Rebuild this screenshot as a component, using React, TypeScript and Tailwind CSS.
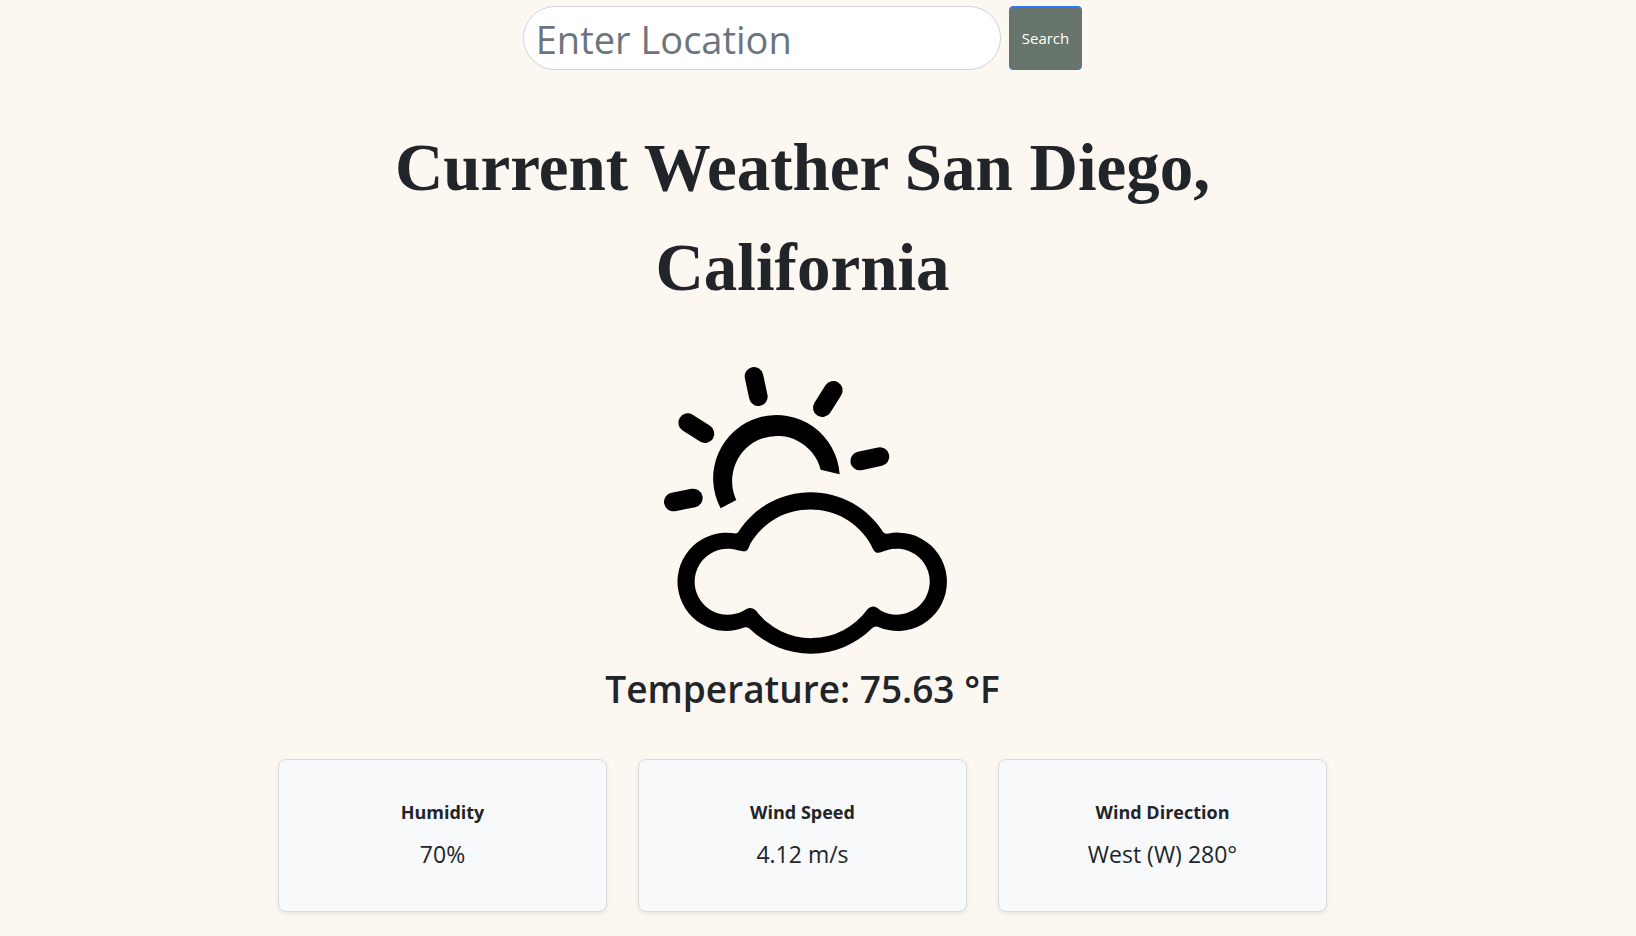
import React from "react";

type Reading = { title: string; value: string };

const readings: Reading[] = [
  { title: "Humidity", value: "70%" },
  { title: "Wind Speed", value: "4.12 m/s" },
  { title: "Wind Direction", value: "West (W) 280°" },
];

function SearchBar() {
  return (
    <form className="flex justify-center gap-2" onSubmit={(e) => e.preventDefault()}>
      <input
        type="text"
        aria-label="Location"
        placeholder="Enter Location"
        className="h-16 w-[478px] rounded-full border border-[#ced4da] bg-white px-3 pt-0.5 text-[38px] text-[#212529] placeholder:text-[#6c757d]"
      />
      <button
        type="submit"
        className="h-16 rounded border border-[#2f74ff] bg-[#68756d] px-3 text-[15px] text-white"
      >
        Search
      </button>
    </form>
  );
}

function PartlyCloudyIcon() {
  return (
    <svg viewBox="8 30 900 900" className="size-[300px]" role="img" aria-label="Partly cloudy">
      <g stroke="#000" strokeWidth="56" strokeLinecap="round">
        <path d="M311 64 324 125" />
        <path d="M549 106 516 158" />
        <path d="M112 203 164 236" />
        <path d="M628 318 689 305" />
        <path d="M69 441 129 429" />
      </g>
      <path d="M211 460A190 190 0 1 1 568 358L511 344A135 135 0 1 0 258 435Z" />
      <path
        transform="translate(0 375)"
        fillRule="evenodd"
        d="M264 156A257 257 0 0 1 698 156Q704 163 712 161A147.5 147.5 0 1 1 682 440Q672 438 666 444A261 261 0 0 1 298 446Q292 440 284 442A147.3 147.3 0 1 1 252 160Q258 162 264 156ZM300 191A209 209 0 0 1 660 191L669 209Q676 222 692 217L700 214A99 99 0 1 1 692 392L680 383Q664 374 652 387A208 208 0 0 1 316 391Q303 380 290 386L278 393A99 99 0 1 1 262 211L274 213Q290 217 295 203Z"
      />
    </svg>
  );
}

function ReadingCard({ title, value }: Reading) {
  return (
    <section className="rounded-lg border border-[#d9dcde] bg-[#f8f9fa] pt-10 pb-[39px] text-center shadow-[0_2px_4px_rgba(0,0,0,0.075)]">
      <h3 className="text-[18px] leading-6 font-bold">{title}</h3>
      <p className="mt-3 text-[23px] leading-9">{value}</p>
    </section>
  );
}

export default function App() {
  return (
    <div className="min-h-screen bg-[#fcf7f0] pt-1.5 pr-[31px] pb-6 font-['Open_Sans','Noto_Sans',sans-serif] text-[#212529]">
      <SearchBar />
      <main className="mx-auto flex max-w-[1049px] flex-col items-center">
        <h1 className="mt-[47px] max-w-[900px] text-center font-['Liberation_Serif',serif] text-[67px] leading-[100px] font-bold">
          Current Weather San Diego, California
        </h1>
        <div className="mt-12">
          <PartlyCloudyIcon />
        </div>
        <h2 className="text-[37px] leading-12 font-semibold">Temperature: 75.63 °F</h2>
        <div className="mt-[46px] grid w-full grid-cols-3 gap-[31px]">
          {readings.map((r) => (
            <ReadingCard key={r.title} {...r} />
          ))}
        </div>
      </main>
    </div>
  );
}
